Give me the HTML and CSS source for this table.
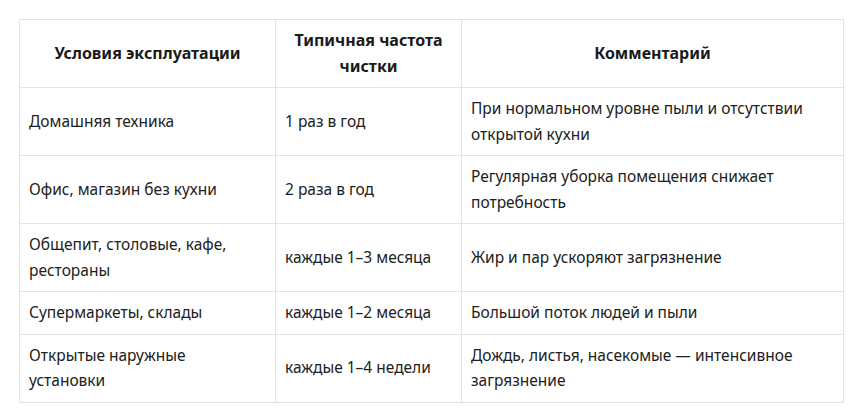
FILE: index.html
```html
<!DOCTYPE html>
<html lang="ru">
<head>
<meta charset="utf-8">
<link rel="stylesheet" href="styles.css">
</head>
<body>
<table class="grid">
  <colgroup>
    <col class="c1"><col class="c2"><col class="c3">
  </colgroup>
  <thead>
    <tr class="head">
      <th>Условия эксплуатации</th>
      <th>Типичная частота чистки</th>
      <th>Комментарий</th>
    </tr>
  </thead>
  <tbody>
    <tr class="tall">
      <td>Домашняя техника</td>
      <td>1 раз в год</td>
      <td>При нормальном уровне пыли и отсутствии открытой кухни</td>
    </tr>
    <tr class="tall">
      <td>Офис, магазин без кухни</td>
      <td>2 раза в год</td>
      <td>Регулярная уборка помещения снижает потребность</td>
    </tr>
    <tr class="tall">
      <td>Общепит, столовые, кафе, рестораны</td>
      <td>каждые 1–3 месяца</td>
      <td>Жир и пар ускоряют загрязнение</td>
    </tr>
    <tr>
      <td>Супермаркеты, склады</td>
      <td>каждые 1–2 месяца</td>
      <td>Большой поток людей и пыли</td>
    </tr>
    <tr class="tall">
      <td>Открытые наружные установки</td>
      <td>каждые 1–4 недели</td>
      <td>Дождь, листья, насекомые — интенсивное загрязнение</td>
    </tr>
  </tbody>
</table>
</body>
</html>
```
FILE: styles.css
```css
html, body {
  margin: 0;
  padding: 0;
  background: #ffffff;
}
body {
  padding: 19px 0 0 19px;
  font-family: "Noto Sans", "Open Sans", sans-serif;
  font-size: 15.5px;
  color: #212121;
}
.grid {
  border-collapse: collapse;
  table-layout: fixed;
  width: 824px;
}
.c1 { width: 256px; }
.c2 { width: 186px; }
.c3 { width: 382px; }
.grid th, .grid td {
  border: 1px solid #e3e3e3;
  padding: 8px 12px 8px 9px;
  line-height: 25.5px;
  vertical-align: middle;
  text-align: left;
}
.grid th {
  font-weight: 700;
  font-size: 16px;
  text-align: center;
  color: #1a1a1a;
  height: 51px;
  padding: 8px 8px;
}
.grid tr.tall td {
  height: 51px;
}
.grid td {
  height: 25.5px;
}
```
